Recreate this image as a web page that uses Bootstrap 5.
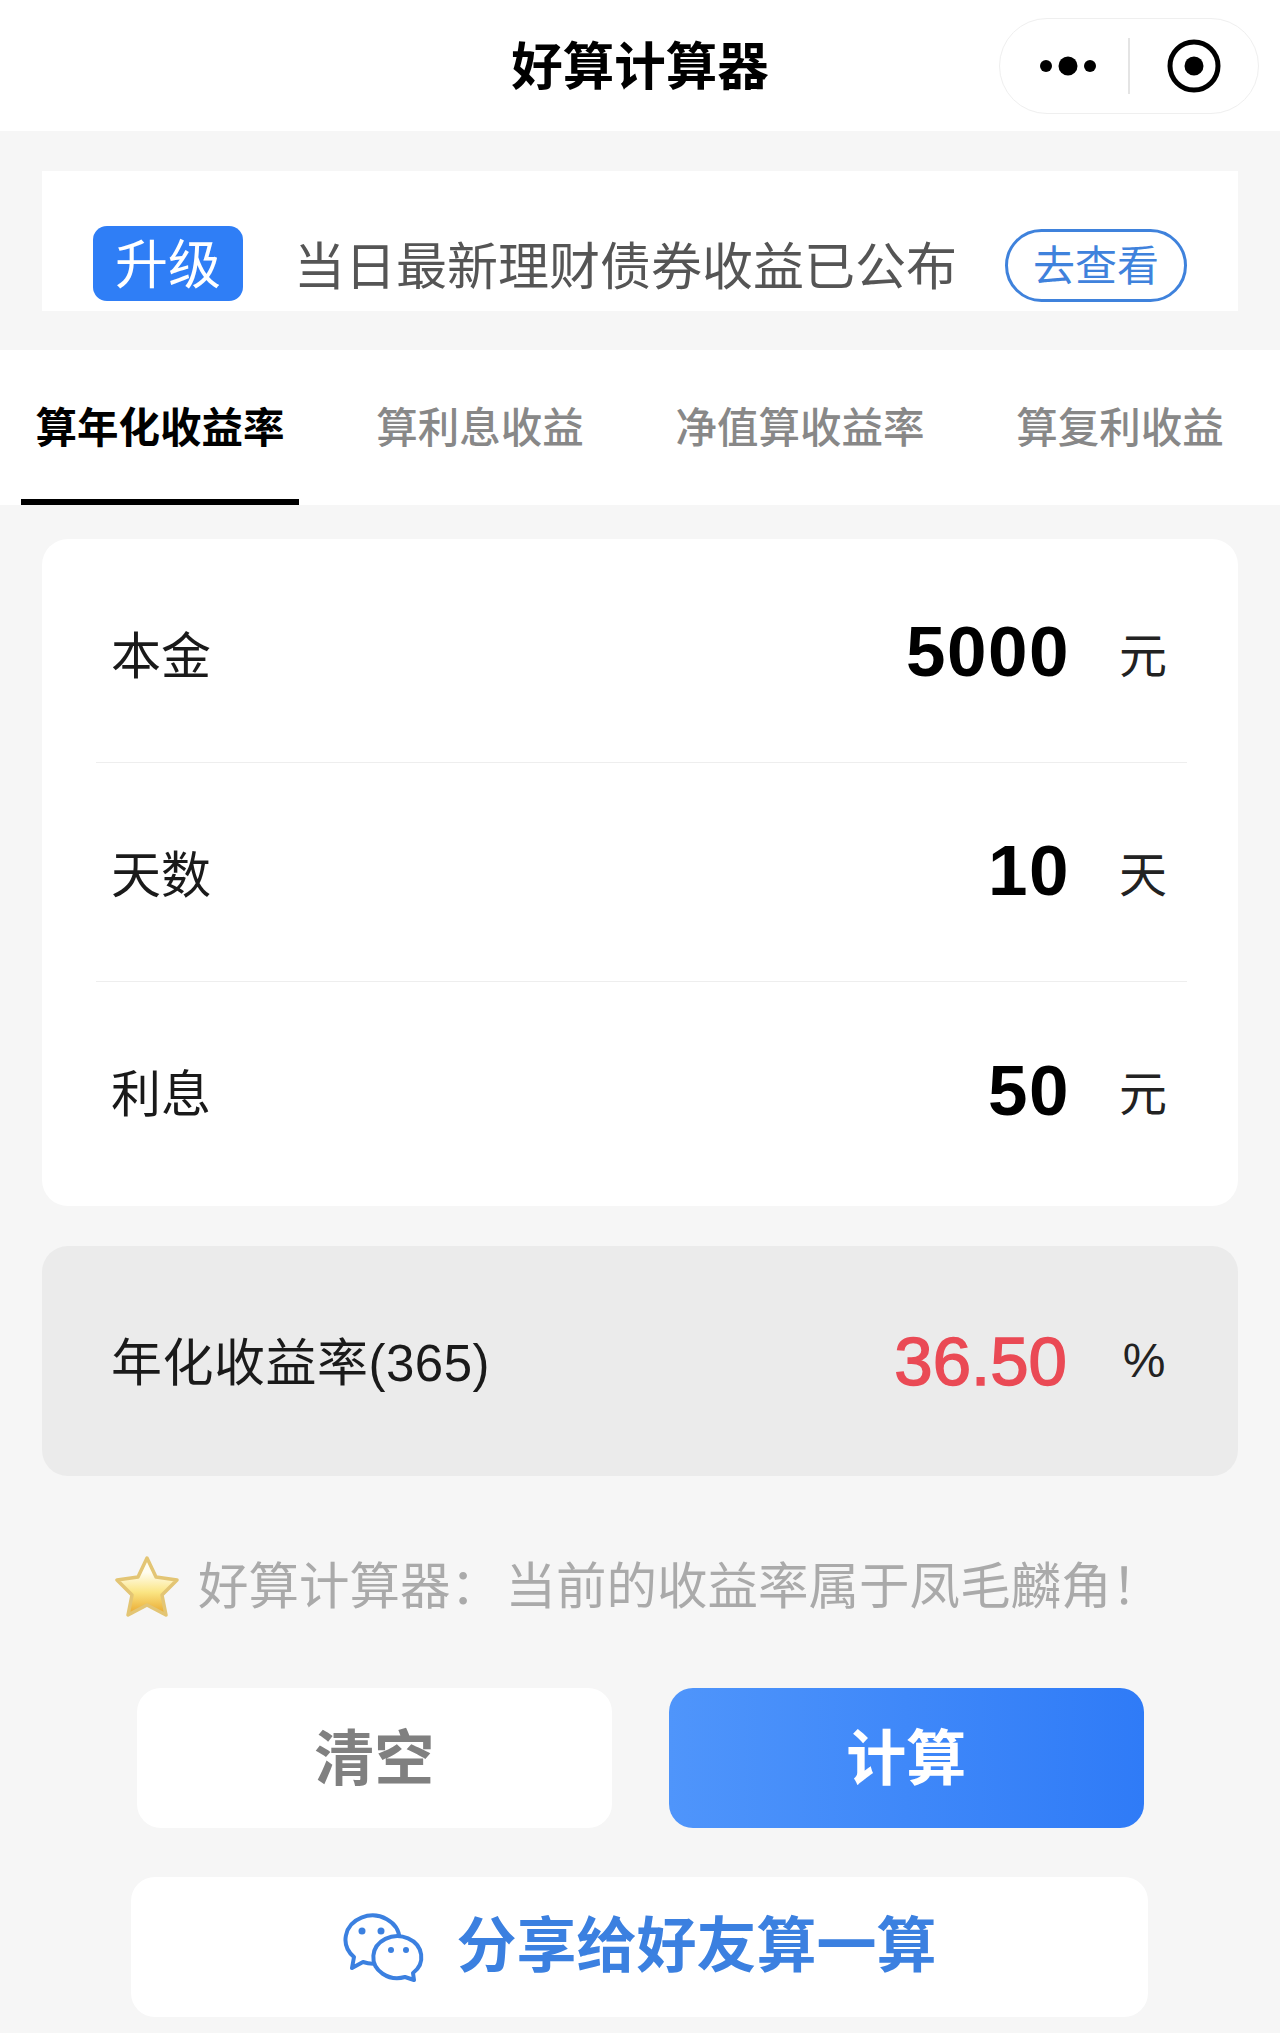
<!doctype html>
<html lang="zh-CN">
<head>
    <meta charset="utf-8">
    <meta name="viewport" content="width=device-width, initial-scale=1">
    <title>好算计算器</title>
    <link href="https://cdn.jsdelivr.net/npm/bootstrap@5.3.3/dist/css/bootstrap.min.css" rel="stylesheet">
    <style>
        html, body { height: 2033px; overflow: hidden; }
        body { background: #f6f6f6; font-family: "Liberation Sans", "Noto Sans CJK SC", sans-serif; color: #222; }
        .app-head { height: 131px; background: #fff; }
        .app-title { font-size: 51.5px; font-weight: 700; color: #000; line-height: 1; padding-top: 4px; }
        .capsule { width: 260px; height: 96px; border: 1.5px solid #efefef; border-radius: 48px; margin-right: 21px; }
        .capsule-part { flex: 1; height: 100%; }
        .capsule-dots { margin-left: 10px; }
        .capsule-line { width: 2px; height: 56px; background: #e4e4e4; }
        .notice { margin: 40px 42px 39px; height: 140px; background: #fff; padding: 55px 51px 0 51px; }
        .tag-up { width: 150px; height: 75px; background: #2f7ef6; color: #fff; border-radius: 14px; font-size: 53px; line-height: 1; padding-top: 3px; }
        .notice-text { font-size: 51px; color: #555; line-height: 1; margin-left: 51px; padding-top: 16px; white-space: nowrap; }
        .go-btn { width: 182px; height: 73px; border: 3.5px solid #3f82dc; border-radius: 37px; color: #3f82dc; font-size: 42px; line-height: 1; margin-left: auto; margin-top: 3px; padding: 2px 0 0; background: #fff; }
        .tab-bar { height: 155px; background: #fff; padding: 0 21px; }
        .tab-item { width: 278px; height: 155px; margin-right: 42px; font-size: 41.5px; font-weight: 500; color: #888; line-height: 1; padding-top: 58px; text-align: center; white-space: nowrap; }
        .tab-item:last-child { margin-right: 0; }
        .tab-item.on { color: #000; font-weight: 700; border-bottom: 6px solid #000; }
        .form-box { margin: 34px 42px 40px; background: #fff; border-radius: 26px; padding: 0 51px 0 54px; }
        .form-line { height: 219px; padding: 7px 20px 0 15px; border-bottom: 1.5px solid #eee; }
        .form-line:first-child { height: 224px; padding-top: 12px; }
        .form-line:last-child { border-bottom: 0; height: 224px; padding-top: 2px; }
        .cell-label { font-size: 50px; line-height: 1; color: #1a1a1a; }
        .cell-num { font-size: 71px; font-weight: 700; line-height: 1; color: #000; margin-left: auto; margin-bottom: 10px; letter-spacing: 1.5px; }
        .cell-unit { width: 48px; margin-left: 49px; font-size: 48px; line-height: 1; color: #222; text-align: center; }
        .result-box { margin: 0 42px; height: 230px; background: #ebebeb; border-radius: 26px; padding: 0 70px 0 69px; }
        .result-label { font-size: 51px; letter-spacing: .5px; margin-top: 5px; }
        .result-num { font-size: 69px; line-height: 1; color: #ea4a55; margin-left: auto; -webkit-text-stroke: 1.5px #ea4a55; }
        .result-box .cell-unit { margin-left: 53px; }
        .hint { height: 212px; padding: 10px 0 0 114px; font-size: 50.5px; line-height: 1; color: #aaa; white-space: nowrap; gap: 18px; word-spacing: -9.6px; }
        .hint-star { margin-bottom: 2px; }
        .btn-pair { gap: 57px; padding: 0 136px 0 137px; }
        .act-btn { width: 475px; height: 140px; border: 0; border-radius: 24px; font-size: 60px; font-weight: 700; line-height: 1; padding: 4px 0 0; }
        .act-clear { background: #fff; color: #808080; }
        .act-calc { width: 476px; background: linear-gradient(90deg, #4f95fb, #2f7bf7); color: #fff; }
        .share-btn { margin: 49px 132px 0 131px; height: 140px; width: 1017px; background: #fff; border: 0; border-radius: 24px; color: #3b80e0; font-size: 60px; font-weight: 700; line-height: 1; gap: 32px; padding: 0 4px 0 0; }
    </style>
</head>
<body>
    <header class="app-head d-flex align-items-center position-relative">
        <div class="app-title flex-grow-1 text-center">好算计算器</div>
        <div class="capsule d-flex align-items-center position-absolute top-50 end-0 translate-middle-y">
            <div class="capsule-part d-flex align-items-center justify-content-center">
                <svg class="capsule-dots" width="58" height="22" viewBox="0 0 58 22"><circle cx="6" cy="11" r="6" fill="#000"/><circle cx="28" cy="11" r="9.5" fill="#000"/><circle cx="50" cy="11" r="6" fill="#000"/></svg>
            </div>
            <div class="capsule-line"></div>
            <div class="capsule-part d-flex align-items-center justify-content-center">
                <svg width="54" height="54" viewBox="0 0 54 54"><circle cx="27" cy="27" r="24" fill="none" stroke="#000" stroke-width="5"/><circle cx="27" cy="27" r="9.5" fill="#000"/></svg>
            </div>
        </div>
    </header>

    <div class="notice d-flex align-items-start">
        <div class="tag-up d-flex align-items-center justify-content-center">升级</div>
        <div class="notice-text">当日最新理财债券收益已公布</div>
        <button class="go-btn d-flex align-items-center justify-content-center" type="button">去查看</button>
    </div>

    <nav class="tab-bar d-flex">
        <div class="tab-item on">算年化收益率</div>
        <div class="tab-item">算利息收益</div>
        <div class="tab-item">净值算收益率</div>
        <div class="tab-item">算复利收益</div>
    </nav>

    <section class="form-box">
        <div class="form-line d-flex align-items-center">
            <span class="cell-label">本金</span><span class="cell-num">5000</span><span class="cell-unit">元</span>
        </div>
        <div class="form-line d-flex align-items-center">
            <span class="cell-label">天数</span><span class="cell-num">10</span><span class="cell-unit">天</span>
        </div>
        <div class="form-line d-flex align-items-center">
            <span class="cell-label">利息</span><span class="cell-num">50</span><span class="cell-unit">元</span>
        </div>
    </section>

    <section class="result-box d-flex align-items-center">
        <span class="cell-label result-label">年化收益率(365)</span><span class="result-num">36.50</span><span class="cell-unit">%</span>
    </section>

    <div class="hint d-flex align-items-center">
        <svg class="hint-star" width="66" height="62" viewBox="0 0 66 62">
            <defs><linearGradient id="starFill" x1="0" y1="0" x2="0" y2="1"><stop offset="0.25" stop-color="#fffdf0"/><stop offset="0.6" stop-color="#fbe583"/><stop offset="1" stop-color="#e8a52a"/></linearGradient></defs>
            <path d="M33 3 L42 22 L63 25 L48 40 L52 60 L33 50 L14 60 L18 40 L3 25 L24 22 Z" fill="url(#starFill)" stroke="#e3c574" stroke-width="3.5" stroke-linejoin="round"/>
        </svg>
        <span>好算计算器： 当前的收益率属于凤毛麟角！</span>
    </div>

    <div class="btn-pair d-flex">
        <button class="act-btn act-clear" type="button">清空</button>
        <button class="act-btn act-calc" type="button">计算</button>
    </div>

    <button class="share-btn d-flex align-items-center justify-content-center" type="button">
        <svg width="86" height="72" viewBox="0 0 86 72">
            <path d="M24 51 A27 24 0 1 0 15 46 L13 57 Z" fill="#fff" stroke="#3b80e0" stroke-width="4" stroke-linejoin="round"/>
            <path d="M74 62 A24 21 0 1 0 66 66 L75 69 Z" fill="#fff" stroke="#3b80e0" stroke-width="4" stroke-linejoin="round"/>
            <circle cx="23" cy="20" r="3.5" fill="#3b80e0"/><circle cx="42" cy="20" r="3.5" fill="#3b80e0"/>
            <circle cx="52" cy="39" r="3" fill="#3b80e0"/><circle cx="67" cy="39" r="3" fill="#3b80e0"/>
        </svg>
        <span>分享给好友算一算</span>
    </button>
    <script src="https://cdn.jsdelivr.net/npm/bootstrap@5.3.3/dist/js/bootstrap.bundle.min.js"></script>
</body>
</html>
